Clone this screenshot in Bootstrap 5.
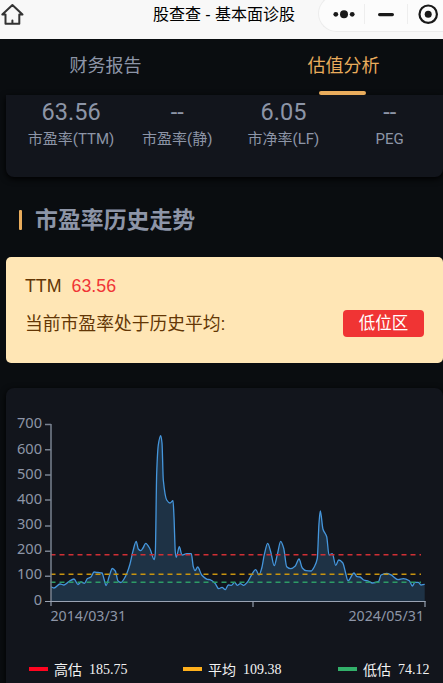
<!DOCTYPE html>
<html lang="zh-CN">
<head>
<meta charset="utf-8">
<meta name="viewport" content="width=device-width, initial-scale=1">
<title>股查查 - 基本面诊股</title>
<link href="https://cdn.jsdelivr.net/npm/bootstrap@5.3.0/dist/css/bootstrap.min.css" rel="stylesheet">
<style>
body{background:#0a0d10;color:#8d95a7;font-family:"Liberation Sans","Noto Sans CJK SC",sans-serif;height:683px;overflow:hidden}
.titlebar{height:39px;background:#f8f8f8;color:#000}
.titlebar h1{font-size:16px;line-height:30px;font-weight:400;padding-left:5px}
.capsule{top:-5px;right:0;width:125px;height:37px;border:1px solid #ececec;border-right:0;border-radius:19px 0 0 19px;background:#fcfcfc}
.home{top:0;left:0}
.tabs{height:56px}
.tab-item{font-size:18px;line-height:55px;height:56px}
.tab-left{width:211px}
.tab-right{width:232px;padding-left:33px}
.tab-right{color:#e9ac5c}
.tab-right::after{content:"";position:absolute;left:108px;bottom:0;width:47px;height:4px;border-radius:2px;background:#e9ac5c}
.panel{background:#12151c;margin-left:6px;box-shadow:0 2px 6px #000}
.metrics{height:82px;border-radius:0 0 8px 8px;padding:0 0 0 12px}
.metric{width:106.2px}
.metric b{font-weight:400;font-size:23.5px;line-height:34px;height:31px;display:block;font-family:Roboto,sans-serif}
.metric span{display:block;font-size:15px;line-height:26px;font-family:Roboto,"Noto Sans CJK SC",sans-serif}
.section-head{height:80px;padding:6px 0 0 19px;gap:13px}
.section-head i{width:3px;height:20px;background:#e9ac5c;border-radius:1px}
.section-head h2{font-size:22.9px;line-height:32px;font-weight:700}
.summary{margin-left:6px;height:106px;border-radius:5px;background:#ffe6b5;color:#633605;font-size:17.8px;padding:16px 19px 0}
.summary .ttm{line-height:26px;gap:10px}
.summary .ttm em{font-style:normal;color:#f03535}
.summary .state{margin-top:11px;height:28px;line-height:28px}
.zone{background:#f03434;color:#fff;width:81px;height:27px;line-height:26px;font-size:16.5px;border-radius:4px}
.chart-panel{margin-top:25px;height:295px;border-radius:8px 8px 0 0}
.chart-panel svg{display:block}
.axis-text{font-family:"Noto Sans","Open Sans",sans-serif;font-size:14.6px;fill:#8d95a7}
.legend-row{height:28px;padding-left:23px;color:#f3f3f3}
.legend-entry{gap:7px}
.legend-entry i{width:19px;height:4px}
.legend-entry span{font:400 14px/24px "Noto Sans CJK SC",sans-serif;margin-left:-1px}
.legend-entry strong{font:400 14px/24px "Liberation Serif",serif;padding-top:1px}
.e1{width:154px}.e2{width:155px}
</style>
</head>
<body>
<header class="titlebar position-relative text-center">
  <svg class="home position-absolute" width="26" height="28" fill="none" stroke="#333" stroke-width="2" stroke-linejoin="round" stroke-linecap="round"><path d="M2.3 14.5 12.4 5 22.5 14.5H19.3V23.8H5.5V14.5ZM12.4 23.5V20.5"/></svg>
  <h1 class="mb-0">股查查 - 基本面诊股</h1>
  <div class="capsule position-absolute"></div>
  <svg class="position-absolute top-0 end-0" width="125" height="30"><g fill="#191919"><circle cx="17.8" cy="14.3" r="2.4"/><circle cx="26" cy="14.2" r="4"/><circle cx="34.2" cy="14.3" r="2.4"/><rect x="60" y="13" width="16" height="3.2" rx="1.6"/><circle cx="110.2" cy="14.2" r="3.5"/></g><circle cx="110.2" cy="14.2" r="8.7" fill="none" stroke="#191919" stroke-width="2.2"/><path d="M46.5 4V24M89.5 4V24" stroke="#eee"/></svg>
</header>
<nav class="tabs d-flex text-center">
  <div class="tab-item tab-left">财务报告</div>
  <div class="tab-item tab-right position-relative">估值分析</div>
</nav>
<section class="panel metrics d-flex text-center">
  <div class="metric"><b>63.56</b><span>市盈率(TTM)</span></div>
  <div class="metric"><b>--</b><span>市盈率(静)</span></div>
  <div class="metric"><b>6.05</b><span>市净率(LF)</span></div>
  <div class="metric"><b>--</b><span>PEG</span></div>
</section>
<div class="section-head d-flex align-items-center"><i></i><h2 class="mb-0">市盈率历史走势</h2></div>
<section class="summary">
  <div class="ttm d-flex"><span>TTM</span><em>63.56</em></div>
  <div class="state d-flex justify-content-between"><span>当前市盈率处于历史平均:</span><span class="zone text-center">低位区</span></div>
</section>
<section class="panel chart-panel">
  <svg width="437" height="267" viewBox="6 388 437 267">
    <path id="area" fill="#1e3245"/>
    <path id="curve" fill="none" stroke="#4596dc" stroke-width="1.3"/>
    <g stroke-width="1.5" stroke-dasharray="5 4" fill="none">
      <path d="M50.5 554.7H421" stroke="#cf2f35"/><path d="M50.5 574.3H421" stroke="#c8940f"/><path d="M50.5 582.2H421" stroke="#2d9b66"/>
    </g>
    <path stroke="#78818f" stroke-width="1.5" fill="none" d="M51 424V606M45 424.5H51M45 449.7H51M45 475H51M45 500H51M45 526H51M45 551.2H51M45 576.3H51M253 601V607M425 601V607"/>
    <path stroke="#9aa3b3" stroke-width="1.2" d="M45 601.5H425.5"/>
    <g class="axis-text" text-anchor="end">
      <text x="42" y="428">700</text><text x="42" y="454">600</text><text x="42" y="479">500</text><text x="42" y="504">400</text><text x="42" y="529">300</text><text x="42" y="554">200</text><text x="42" y="579">100</text><text x="42" y="605">0</text>
      <text x="424" y="621" textLength="75.5" lengthAdjust="spacingAndGlyphs">2024/05/31</text>
    </g>
    <text class="axis-text" x="50.5" y="621" textLength="75.5" lengthAdjust="spacingAndGlyphs">2014/03/31</text>
  </svg>
  <div class="legend-row d-flex">
    <div class="legend-entry e1 d-flex align-items-center"><i style="background:#ff0520"></i><span>高估</span><strong>185.75</strong></div>
    <div class="legend-entry e2 d-flex align-items-center"><i style="background:#ffb01c"></i><span>平均</span><strong>109.38</strong></div>
    <div class="legend-entry d-flex align-items-center"><i style="background:#32b06a"></i><span>低估</span><strong>74.12</strong></div>
  </div>
</section>
<script>
// Smooth the series with a monotone cubic, so peaks never overshoot.
const pts = [[51,587],[54,588],[60,584],[64,585],[69,581.5],[74,579],[78,584.5],[81,582],[84.5,583.3],[87.5,578.5],[91,577],[94,572],[98,572.5],[102,573],[104,579],[106,585.5],[109,577],[112.3,568.5],[115.3,571],[118,581],[121,582.5],[124,579],[127,573],[130,564],[133,551],[136.2,541.3],[138.3,549],[140.7,550.7],[143,548],[145.7,543.3],[150,549],[154.3,559.7],[155.3,553],[156.7,473],[158.3,445],[160.7,435.7],[162,443],[163.3,480],[166.7,500],[170,503],[173,500.7],[174,517],[175.3,552],[176.3,557.3],[179.3,546.7],[182,555],[186.7,553.7],[191.3,553.7],[193.3,566.7],[195,570.7],[197.7,567],[201.7,575],[207.3,579.3],[210,579.7],[215,583.3],[218.7,588.7],[222,587.3],[225.3,589.7],[228.3,585],[231.3,585.3],[234.7,582.3],[237.3,585.3],[240.3,583.7],[243.7,585.3],[247.3,582.3],[251.3,575.3],[255.7,569.7],[259,575],[261.7,568.3],[264.3,554.7],[267.7,543.3],[270.7,551.7],[274.2,565.7],[277.3,554.7],[280.7,541.3],[283.7,548.3],[286.7,566.7],[290.7,568.7],[295.3,566],[299,559],[302.3,568],[306,570.7],[311,571],[314.7,566],[317.3,558.3],[319,523.3],[320.3,511],[323,529.3],[326.7,536.7],[329,555],[332.3,553.7],[335.7,565.3],[338.7,560],[342.7,562.7],[345.3,571.7],[348,580.7],[354,573],[357,576.7],[360,577],[363.7,580],[368.7,581.3],[372.3,583],[378.7,581.3],[381,575],[386.7,573.3],[390.7,574.7],[398,579.7],[403.3,578.7],[409.3,580.7],[412.3,586],[415,582.3],[418.3,582.3],[421,585],[424.7,584.3]];
const n = pts.length, s = [], m = [];
for (let i = 0; i < n - 1; i++) s.push((pts[i+1][1]-pts[i][1])/(pts[i+1][0]-pts[i][0]));
for (let i = 0; i < n; i++) {
  if (i === 0 || i === n - 1) m.push(0);
  else m.push(s[i-1]*s[i] <= 0 ? 0 : 2*s[i-1]*s[i]/(s[i-1]+s[i]));
}
let d = "M" + pts[0];
for (let i = 0; i < n - 1; i++) {
  const [x,y] = pts[i], [u,v] = pts[i+1], h = (u-x)/3;
  d += `C${x+h} ${y+m[i]*h} ${u-h} ${v-m[i+1]*h} ${u} ${v}`;
}
document.getElementById("curve").setAttribute("d", d);
document.getElementById("area").setAttribute("d", d + "V601H51Z");
</script>
<script src="https://cdn.jsdelivr.net/npm/bootstrap@5.3.0/dist/js/bootstrap.bundle.min.js"></script>
</body>
</html>
